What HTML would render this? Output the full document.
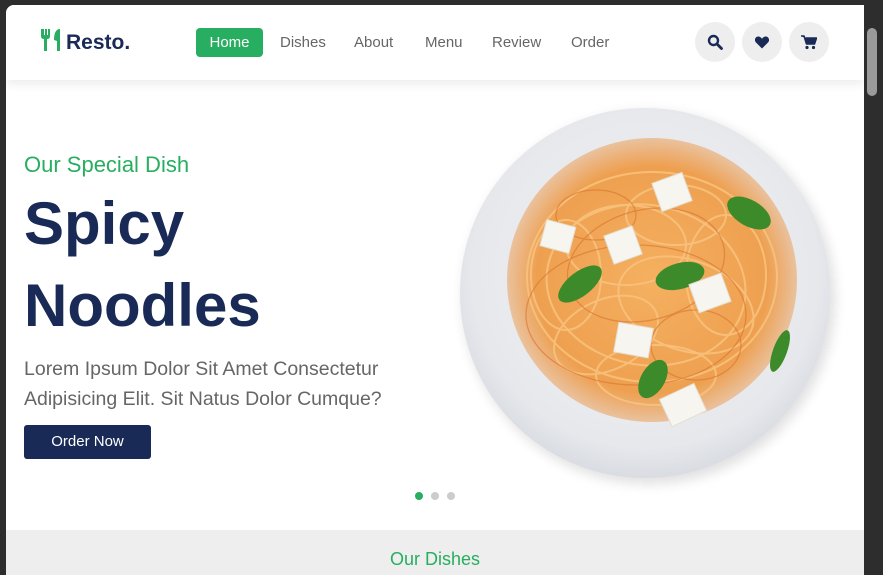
<!DOCTYPE html>
<html><head><meta charset="utf-8"><style>
*{margin:0;padding:0;box-sizing:border-box}
body{width:883px;height:575px;background:#2d2d2d;overflow:hidden;font-family:"Liberation Sans",sans-serif;position:relative}
#page{position:absolute;left:6px;top:5px;width:858px;height:570px;background:#fff;border-top-left-radius:8px;overflow:hidden}
header{position:absolute;left:0;top:0;width:858px;height:75px;background:#fff;box-shadow:0 4px 10px rgba(0,0,0,.08);z-index:2}
.logo{position:absolute;left:34px;top:23px;font-size:21px;font-weight:bold;color:#192a56}
.nav a{position:absolute;top:29px;font-size:15px;color:#666;text-decoration:none}
.home{position:absolute;left:190px;top:23px;width:67px;height:29px;background:#27ae60;border-radius:4px;color:#fff;font-size:15px;text-align:center;line-height:29px}
.ic{position:absolute;top:17px;width:40px;height:40px;border-radius:50%;background:#eee}
.ic svg{position:absolute;left:12px;top:12px}
.t1{position:absolute;left:18px;top:147px;font-size:22px;color:#27ae60}
.t2{position:absolute;left:18px;font-size:60px;font-weight:bold;color:#192a56}
.p{position:absolute;left:18px;top:349px;font-size:19.5px;line-height:30px;color:#666}
.btn{position:absolute;left:18px;top:420px;width:127px;height:34px;background:#192a56;border-radius:3px;color:#fff;font-size:15px;text-align:center;line-height:34px}
.dot{position:absolute;top:487px;width:8px;height:8px;border-radius:50%;background:#ccc}
.sec{position:absolute;left:0;top:525px;width:858px;height:60px;background:#eee}
.sec div{position:absolute;left:0;width:858px;top:19px;text-align:center;font-size:18px;color:#27ae60}
.sb{position:absolute;left:867px;top:28px;width:10px;height:68px;background:#9a9a9a;border-radius:5px}
</style></head><body>
<div id="page">
<header>
<div class="logo"><svg width="22" height="24" viewBox="0 0 22 24" style="vertical-align:-3px;margin-right:4px"><path d="M1 1v7c0 2 1 3 3 3v12h3V11c2 0 3-1 3-3V1H8v6H7V1H5v6H4V1z" fill="#27ae60"/><path d="M14 12c0-7 2-11 6-11v22h-3V13z" fill="#27ae60"/></svg>Resto.</div>
<div class="home">Home</div>
<div class="nav"><a style="left:274px">Dishes</a><a style="left:348px">About</a><a style="left:419px">Menu</a><a style="left:486px">Review</a><a style="left:565px">Order</a></div>
<div class="ic" style="left:689px"><svg width="16" height="16" viewBox="0 0 16 16"><circle cx="6.5" cy="6.5" r="4.5" fill="none" stroke="#192a56" stroke-width="2.4"/><path d="M10 10l4.5 4.5" stroke="#192a56" stroke-width="2.8" stroke-linecap="round"/></svg></div>
<div class="ic" style="left:736px"><svg width="16" height="16" viewBox="0 0 16 16"><path d="M8 14.5L2 8.5C0 6.5 1 2.5 4.3 2.5c1.8 0 3 1.3 3.7 2.3.7-1 1.9-2.3 3.7-2.3 3.3 0 4.3 4 2.3 6z" fill="#192a56"/></svg></div>
<div class="ic" style="left:783px"><svg width="16" height="16" viewBox="0 0 16 16"><path d="M0 2h3l2.5 8h8l2-6H4.5" fill="#192a56" stroke="#192a56" stroke-width="1.6" stroke-linejoin="round"/><circle cx="6" cy="13.5" r="1.6" fill="#192a56"/><circle cx="12.5" cy="13.5" r="1.6" fill="#192a56"/></svg></div>
</header>
<div class="t1">Our Special Dish</div>
<div class="t2" style="top:184px">Spicy</div>
<div class="t2" style="top:266px">Noodles</div>
<div class="p">Lorem Ipsum Dolor Sit Amet Consectetur<br>Adipisicing Elit. Sit Natus Dolor Cumque?</div>
<div class="btn">Order Now</div>
<svg style="position:absolute;left:440px;top:90px" width="400" height="400" viewBox="0 0 400 400">
<defs><radialGradient id="pl" cx="50%" cy="45%" r="55%"><stop offset="0" stop-color="#f2f3f6"/><stop offset=".85" stop-color="#e6e8ec"/><stop offset="1" stop-color="#d9dce2"/></radialGradient>
<radialGradient id="pa" cx="50%" cy="50%" r="50%"><stop offset="0" stop-color="#f4b060"/><stop offset=".8" stop-color="#eea050"/><stop offset="1" stop-color="#eb9a4e" stop-opacity=".5"/></radialGradient></defs>
<circle cx="203" cy="203" r="186" fill="#000" opacity=".12" filter="blur(6px)"/>
<circle cx="199" cy="198" r="185" fill="url(#pl)"/>
<ellipse cx="206" cy="185" rx="145" ry="142" fill="url(#pa)"/>
<g fill="none" stroke="#f8c27d" stroke-width="2" opacity=".9">
<ellipse cx="180" cy="150" rx="60" ry="40"/><ellipse cx="240" cy="210" rx="70" ry="45" transform="rotate(20 240 210)"/>
<ellipse cx="160" cy="240" rx="55" ry="35" transform="rotate(-25 160 240)"/><ellipse cx="230" cy="120" rx="50" ry="30"/>
<ellipse cx="280" cy="180" rx="40" ry="60"/><ellipse cx="120" cy="180" rx="35" ry="55"/><ellipse cx="210" cy="280" rx="60" ry="30"/>
<ellipse cx="200" cy="190" rx="100" ry="80" transform="rotate(10 200 190)"/><ellipse cx="206" cy="182" rx="125" ry="105"/>
</g>
<g fill="none" stroke="#d9722e" stroke-width="1.3" opacity=".6">
<ellipse cx="200" cy="170" rx="80" ry="55" transform="rotate(-15 200 170)"/><ellipse cx="250" cy="250" rx="45" ry="35"/><ellipse cx="150" cy="120" rx="40" ry="25"/><ellipse cx="190" cy="220" rx="110" ry="70"/>
</g>
<g fill="#3d8a2a"><ellipse cx="134" cy="189" rx="26" ry="12" transform="rotate(-38 134 189)"/><ellipse cx="234" cy="181" rx="25" ry="13" transform="rotate(-15 234 181)"/><ellipse cx="303" cy="118" rx="24" ry="13" transform="rotate(30 303 118)"/><ellipse cx="207" cy="284" rx="12" ry="21" transform="rotate(30 207 284)"/><ellipse cx="334" cy="256" rx="7" ry="22" transform="rotate(20 334 256)"/></g>
<g fill="#f7f5ef" stroke="#e3ddd0"><rect x="210" y="82" width="32" height="30" transform="rotate(-20 226 97)"/><rect x="97" y="128" width="30" height="27" transform="rotate(15 112 141)"/><rect x="162" y="135" width="30" height="30" transform="rotate(-20 177 150)"/><rect x="247" y="183" width="34" height="30" transform="rotate(-20 264 198)"/><rect x="170" y="230" width="35" height="30" transform="rotate(10 187 245)"/><rect x="218" y="295" width="38" height="30" transform="rotate(-25 237 310)"/></g>
</svg>
<div class="dot" style="left:409px;background:#27ae60"></div><div class="dot" style="left:425px"></div><div class="dot" style="left:441px"></div>
<div class="sec"><div>Our Dishes</div></div>
</div>
<div class="sb"></div>
</body></html>
